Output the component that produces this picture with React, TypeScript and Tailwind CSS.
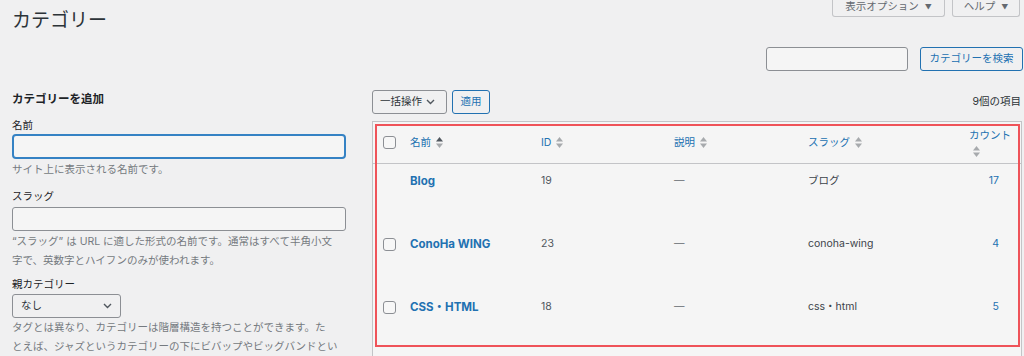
import React from "react";

const FONT = 'Inter, "Noto Sans CJK JP", "Noto Sans", sans-serif';

function Sort({ active = false }: { active?: boolean }) {
  return (
    <svg width="7" height="11" viewBox="0 0 7 11" className="shrink-0">
      <polygon points="0,4.5 3.5,0 7,4.5" fill={active ? "#50575e" : "#a7aaad"} />
      <polygon points="0,6.5 3.5,11 7,6.5" fill="#a7aaad" />
    </svg>
  );
}

function Chevron() {
  return (
    <svg width="9" height="6" viewBox="0 0 9 6" className="shrink-0">
      <path d="M1 1 L4.5 4.5 L8 1" fill="none" stroke="#50575e" strokeWidth="1.4" />
    </svg>
  );
}

function Check() {
  return <div className="w-[13px] h-[13px] rounded-[3px] border border-[#8c8f94] bg-[#f7f7f7]" />;
}

const rows = [
  { name: "Blog", id: "19", slug: "ブログ", count: "17", cb: false },
  { name: "ConoHa WING", id: "23", slug: "conoha-wing", count: "4", cb: true },
  { name: "CSS・HTML", id: "18", slug: "css・html", count: "5", cb: true },
];

export default function App() {
  return (
    <div
      className="w-[1024px] h-[356px] overflow-hidden bg-[#f0f0f1] text-[#3c434a] text-[10.5px]"
      style={{ fontFamily: FONT }}
    >
      {/* header */}
      <div className="h-[47px] flex justify-between items-start">
        <h1 className="pl-[12px] pt-[6px] leading-[30px] text-[19px] text-[#2c3338] font-normal">カテゴリー</h1>
        <div className="flex gap-[7px] pr-[4px]">
          <div className="h-[17px] w-[113px] border-x border-b border-[#c3c4c7] rounded-b-[3px] flex items-center justify-center gap-[6px] text-[#646970] text-[10.5px] leading-none pb-[2px]">
            表示オプション <span className="text-[7px]">▼</span>
          </div>
          <div className="h-[17px] w-[68px] border-x border-b border-[#c3c4c7] rounded-b-[3px] flex items-center justify-center gap-[6px] text-[#646970] text-[10.5px] leading-none pb-[2px]">
            ヘルプ <span className="text-[7px]">▼</span>
          </div>
        </div>
      </div>

      {/* search */}
      <div className="h-[24px] flex justify-end gap-[12px] pr-[1px]">
        <div className="w-[142px] h-[24px] border border-[#8c8f94] rounded-[3px] bg-[#f5f5f5]" />
        <div className="w-[103px] h-[24px] border border-[#2271b1] rounded-[3px] flex items-center justify-center text-[#2271b1] text-[10.5px]">
          カテゴリーを検索
        </div>
      </div>

      {/* main */}
      <div className="mt-[19px] flex pl-[12px] gap-[26px]">
        {/* left */}
        <div className="w-[334px] shrink-0">
          <h2 className="text-[11.5px] font-bold leading-[18px] text-[#1d2327]">カテゴリーを追加</h2>
          <div className="mt-[10px] leading-[16px] text-[#1d2327]">名前</div>
          <div className="h-[25px] border-2 border-[#3582c4] rounded-[4px] bg-[#f5f5f5]" />
          <div className="mt-[3px] leading-[16px] text-[#757a80]">サイト上に表示される名前です。</div>
          <div className="mt-[11px] leading-[16px] text-[#1d2327]">スラッグ</div>
          <div className="mt-[2px] h-[24px] border border-[#8c8f94] rounded-[3px] bg-[#f5f5f5]" />
          <div className="mt-[1px] leading-[19px] text-[#757a80] whitespace-nowrap">
            <div>“スラッグ” は URL に適した形式の名前です。通常はすべて半角小文</div>
            <div>字で、英数字とハイフンのみが使われます。</div>
          </div>
          <div className="mt-[7px] leading-[16px] text-[#1d2327]">親カテゴリー</div>
          <div className="mt-[1px] w-[109px] h-[24px] border border-[#8c8f94] rounded-[3px] flex items-center justify-between pl-[8px] pr-[8px] text-[#2c3338]">
            <span>なし</span>
            <Chevron />
          </div>
          <div className="leading-[19px] text-[#757a80] whitespace-nowrap">
            <div>タグとは異なり、カテゴリーは階層構造を持つことができます。た</div>
            <div>とえば、ジャズというカテゴリーの下にビバップやビッグバンドとい</div>
          </div>
        </div>

        {/* right */}
        <div className="w-[651px] shrink-0">
          <div className="h-[24px] flex items-center">
            <div className="w-[75px] h-[24px] border border-[#8c8f94] rounded-[3px] flex items-center gap-[4px] pl-[7px] text-[#2c3338]">
              <span>一括操作</span>
              <Chevron />
            </div>
            <div className="ml-[5px] w-[38px] h-[24px] border border-[#2271b1] rounded-[3px] flex items-center justify-center text-[#2271b1]">
              適用
            </div>
            <div className="ml-auto pr-[2px] text-[#2c3338]">9個の項目</div>
          </div>

          <div className="relative mt-[7px] w-[650px] h-[300px] border border-[#c3c4c7] bg-[#f5f5f5]">
            {/* header row */}
            <div className="h-[42px] grid grid-cols-[37px_131px_133px_134px_153px_1fr] items-center border-b border-[#c3c4c7]">
              <div className="pl-[10px]"><Check /></div>
              <div className="flex items-center gap-[5px] text-[#2271b1]">名前 <Sort active /></div>
              <div className="flex items-center gap-[5px] text-[#2271b1]">ID <Sort /></div>
              <div className="flex items-center gap-[5px] text-[#2271b1]">説明 <Sort /></div>
              <div className="flex items-center gap-[5px] text-[#2271b1]">スラッグ <Sort /></div>
              <div className="flex flex-col items-start pl-[8px] text-[#2271b1] leading-[16px]">
                <span>カウント</span>
                <span className="pl-[4px] pt-[2px]"><Sort /></span>
              </div>
            </div>
            {rows.map((r) => (
              <div key={r.name} className="h-[63px] grid grid-cols-[37px_131px_133px_134px_153px_1fr] items-start pt-[9px] leading-[16px]">
                <div className="pl-[10px] pt-[2px]">{r.cb ? <Check /> : null}</div>
                <div className="font-bold text-[#2271b1] text-[11.5px]">{r.name}</div>
                <div className="text-[#50575e]">{r.id}</div>
                <div className="text-[#646970]">—</div>
                <div className="text-[#3c434a]">{r.slug}</div>
                <div className="text-right pr-[22px] text-[#2271b1]">{r.count}</div>
              </div>
            ))}
            {/* annotation overlay */}
            <div className="absolute left-[2px] top-[2px] w-[645px] h-[223px] border-2 border-[#ef5359] pointer-events-none" />
          </div>
        </div>
      </div>
    </div>
  );
}
